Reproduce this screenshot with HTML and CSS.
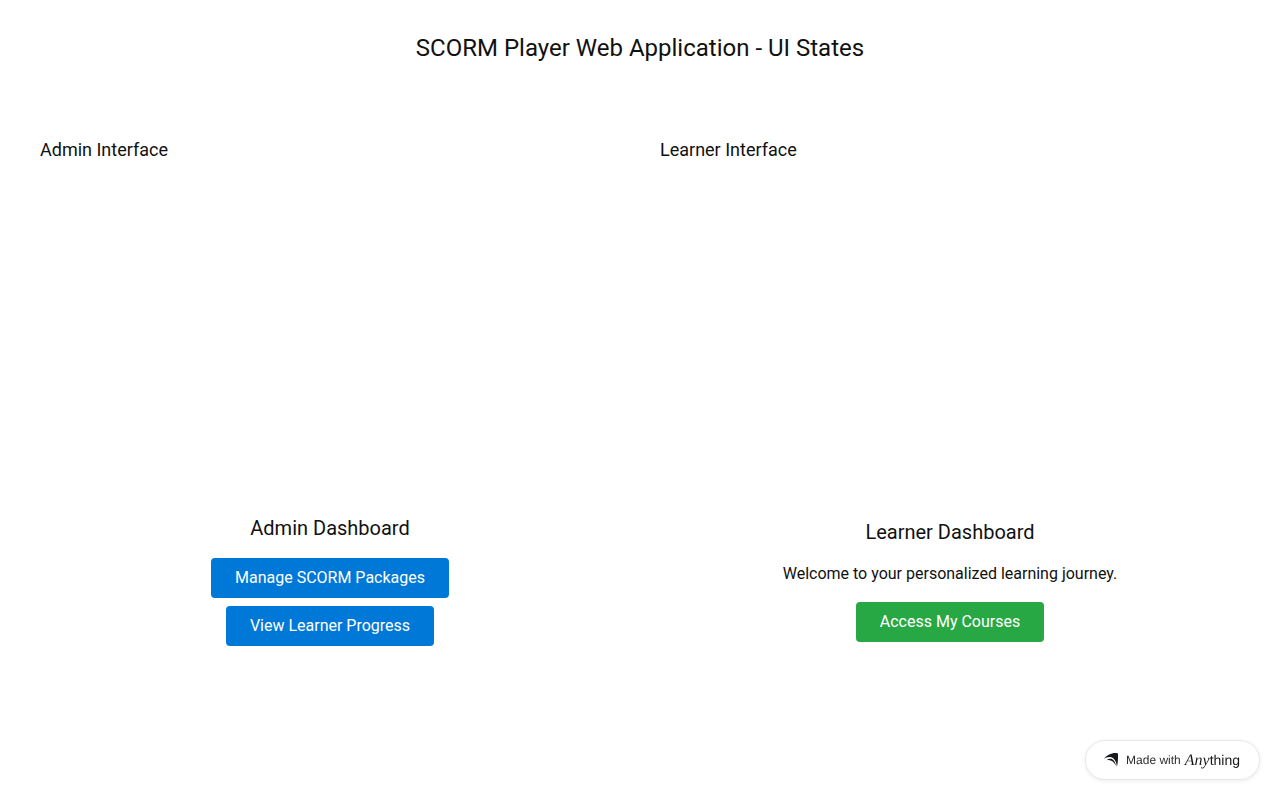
FILE: index.html
```html
<!DOCTYPE html>
<html lang="en">
<head>
<meta charset="utf-8">
<meta name="viewport" content="width=device-width, initial-scale=1">
<title>SCORM Player Web Application</title>
<link rel="stylesheet" href="styles.css">
</head>
<body>
<main class="page">
  <h1 class="page-title">SCORM Player Web Application - UI States</h1>
  <div class="columns">
    <section class="column">
      <h2 class="column-title">Admin Interface</h2>
      <div class="dashboard">
        <h3 class="dashboard-title">Admin Dashboard</h3>
        <div class="actions">
          <button class="button" type="button">Manage SCORM Packages</button>
          <button class="button" type="button">View Learner Progress</button>
        </div>
      </div>
    </section>
    <section class="column">
      <h2 class="column-title">Learner Interface</h2>
      <div class="dashboard">
        <h3 class="dashboard-title">Learner Dashboard</h3>
        <p class="welcome">Welcome to your personalized learning journey.</p>
        <button class="button button-green" type="button">Access My Courses</button>
      </div>
    </section>
  </div>
</main>
<a class="badge" href="#">
  <svg class="badge-icon" width="14" height="16" viewBox="0 0 14 16" aria-hidden="true">
    <path d="M0 7C2.500 3.200 7 .8 12.500 1C13.600 1 14 1.600 14 2.800C14.200 7.500 13.700 11.500 12.900 15C12.600 10.500 11 6.800 7.800 5.500C5 4.600 2.500 5.300 0 7Z"/>
    <path d="M2.500 8.200C5 6.300 8 6.400 9.800 8.400C11 9.800 11.700 11.700 11.900 13.800C10.500 11.200 9.300 9.600 7.300 8.800C5.800 8 4.200 7.800 2.500 8.200Z"/>
  </svg>
  <span class="badge-text">Made with</span>
  <span class="wordmark"><span class="wordmark-serif">Any</span><span class="wordmark-sans">thing</span></span>
</a>
</body>
</html>
```
FILE: styles.css
```css
* {
  box-sizing: border-box;
}

body {
  margin: 0;
  background: #fff;
  color: #111;
  font: 16px/24px Roboto, "Liberation Sans", sans-serif;
}

h1, h2, h3, p {
  margin: 0;
  font-weight: 400;
}

.page {
  padding: 32px 40px;
}

.page-title {
  margin-bottom: 72px;
  font-size: 24px;
  line-height: 32px;
  text-align: center;
}

.columns {
  display: grid;
  grid-template-columns: 1fr 1fr;
  gap: 40px;
}

.column-title {
  margin-bottom: 16px;
  font-size: 18px;
  line-height: 28px;
}

.dashboard {
  display: flex;
  flex-direction: column;
  align-items: center;
  justify-content: center;
  gap: 16px;
  min-height: 100vh;
}

.dashboard-title {
  font-size: 20px;
  line-height: 28px;
}

.actions {
  display: flex;
  flex-direction: column;
  align-items: center;
  gap: 8px;
}

.button {
  padding: 8px 24px;
  border: 0;
  border-radius: 4px;
  background: #0078d7;
  color: #fff;
  font: inherit;
  cursor: pointer;
}

.button-green {
  background: #28a745;
}

.badge {
  position: fixed;
  right: 20px;
  bottom: 20px;
  display: flex;
  align-items: center;
  height: 40px;
  padding: 0 19px 0 18px;
  border: 1px solid #e8e8e8;
  border-radius: 20px;
  background: #fff;
  box-shadow: 0 1px 4px rgba(0, 0, 0, 0.08);
  color: #18191b;
  text-decoration: none;
  text-rendering: geometricPrecision;
  white-space: nowrap;
}

.badge-icon {
  margin-right: 8px;
  fill: currentColor;
}

.badge-text {
  margin-right: 4px;
  color: #2b2c30;
  font: 12px/16px "Liberation Sans", Arial, sans-serif;
}

.wordmark {
  display: flex;
  align-items: baseline;
  line-height: 20px;
}

.wordmark-serif {
  font-family: "Liberation Serif", serif;
  font-size: 16px;
  font-style: italic;
}

.wordmark-sans {
  font-family: "Liberation Sans", Arial, sans-serif;
  font-size: 14px;
}
```
